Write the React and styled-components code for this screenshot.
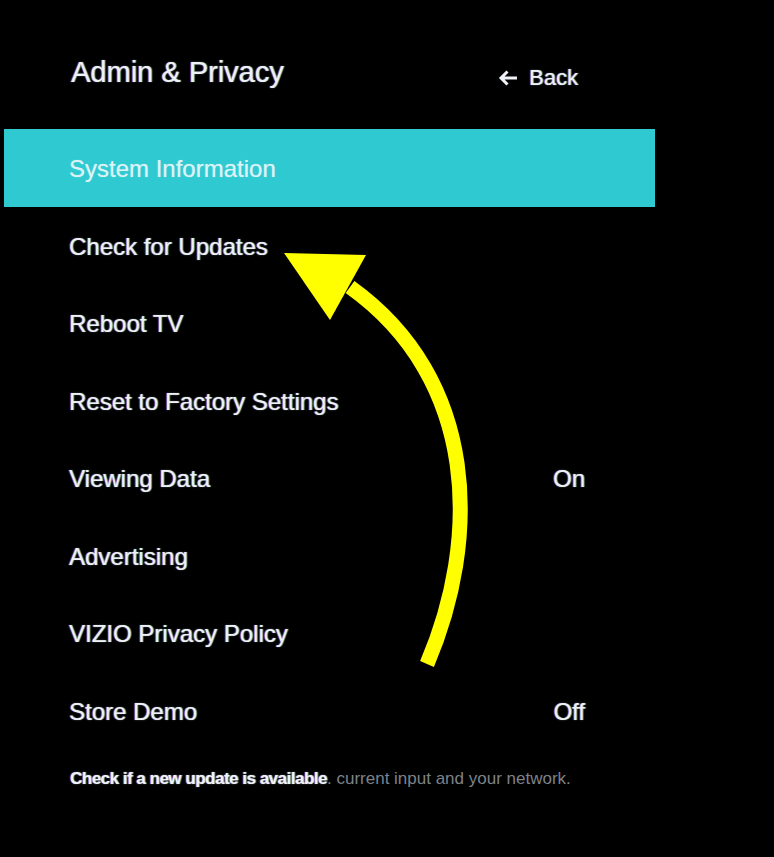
import React from "react";
import styled, { createGlobalStyle } from "styled-components";

const Global = createGlobalStyle`
  html, body { margin: 0; padding: 0; background: #000; }
  body { font-family: "Liberation Sans", Arial, sans-serif; }
  #root { min-height: 857px; }
`;

const Page = styled.div`
  position: relative;
  width: 774px;
  height: 857px;
  background: #000;
  padding-top: 55px;
  box-sizing: border-box;
  overflow: hidden;
`;

const Panel = styled.div`
  width: 651px;
  margin-left: 4px;
  display: flex;
  flex-direction: column;
`;

const glow = `
  text-shadow: -1px 0 rgba(255, 70, 130, 0.45), 1px 0 rgba(90, 235, 255, 0.55), 0 0 2px rgba(200, 240, 255, 0.35);
`;

const Header = styled.div`
  display: flex;
  align-items: flex-start;
  justify-content: space-between;
  padding: 0 77px 0 67px;
  height: 74px;
`;

const Title = styled.h1`
  margin: 0;
  font-size: 29px;
  line-height: 34px;
  font-weight: 400;
  color: #eef2f6;
  ${glow}
`;

const BackButton = styled.div`
  margin-top: 10px;
  display: flex;
  align-items: center;
  gap: 11px;
  font-size: 22px;
  line-height: 26px;
  color: #eef2f6;
  ${glow}
`;

const List = styled.div`
  display: flex;
  flex-direction: column;
`;

const Row = styled.div`
  height: 77.5px;
  box-sizing: border-box;
  display: flex;
  align-items: center;
  justify-content: space-between;
  padding: 3px 70px 0 65px;
  background: ${(p) => (p.$active ? "#2fc9d1" : "transparent")};
  color: ${(p) => (p.$active ? "#dcf3f6" : "#eef2f6")};
  font-size: 24px;
  line-height: 28px;
  ${(p) => (p.$active ? "text-shadow: 0 0 1px rgba(230,250,255,0.6);" : glow)}
`;

const Value = styled.span`
  font-size: 24px;
`;

const Help = styled.div`
  margin-top: 20px;
  padding-left: 66px;
  font-size: 17px;
  line-height: 20px;
  white-space: nowrap;
`;

const HelpStrong = styled.span`
  color: #f0f4f8;
  font-weight: 700;
  letter-spacing: -0.5px;
  ${glow}
`;

const HelpGhost = styled.span`
  color: #7d8288;
`;

const ArrowOverlay = styled.svg`
  position: absolute;
  left: 0;
  top: 0;
  pointer-events: none;
`;

const BackArrow = () => (
  <svg width="20" height="18" viewBox="0 0 20 18">
    <path d="M19 9H3M9.5 2.5L3 9l6.5 6.5" fill="none" stroke="#eef2f6" strokeWidth="3" />
  </svg>
);

const items = [
  { label: "System Information", active: true },
  { label: "Check for Updates" },
  { label: "Reboot TV" },
  { label: "Reset to Factory Settings" },
  { label: "Viewing Data", value: "On" },
  { label: "Advertising" },
  { label: "VIZIO Privacy Policy" },
  { label: "Store Demo", value: "Off" },
];

export default function App() {
  return (
    <>
      <Global />
      <Page>
        <Panel>
          <Header>
            <Title>Admin &amp; Privacy</Title>
            <BackButton>
              <BackArrow />
              <span>Back</span>
            </BackButton>
          </Header>
          <List>
            {items.map((it) => (
              <Row key={it.label} $active={it.active}>
                <span>{it.label}</span>
                {it.value && <Value>{it.value}</Value>}
              </Row>
            ))}
          </List>
          <Help>
            <HelpStrong>Check if a new update is available</HelpStrong>
            <HelpGhost>. current input and your network.</HelpGhost>
          </Help>
        </Panel>
        <ArrowOverlay width="774" height="857" viewBox="0 0 774 857">
          <path
            d="M427 664 C480 540, 480 380, 350 287"
            fill="none"
            stroke="#ffff00"
            strokeWidth="15"
            strokeLinecap="butt"
          />
          <polygon points="284,253 366,255 330,320" fill="#ffff00" />
        </ArrowOverlay>
      </Page>
    </>
  );
}
